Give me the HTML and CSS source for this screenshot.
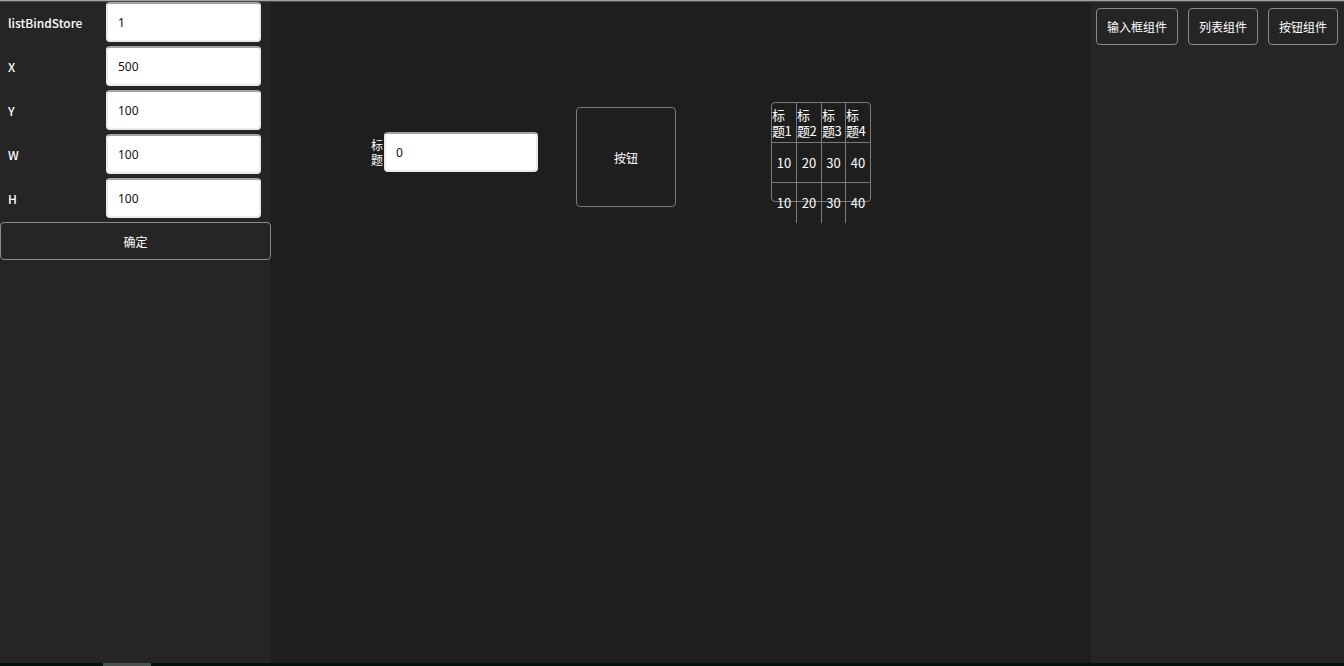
FILE: index.html
```html
<!DOCTYPE html>
<html lang="zh">
<head>
<meta charset="utf-8">
<title>编辑器</title>
<link rel="stylesheet" href="styles.css">
</head>
<body>
<div class="topbar"></div>
<div class="main">
  <aside class="props">
    <div class="row"><label class="lbl">listBindStore</label><input class="inp" value="1"></div>
    <div class="row"><label class="lbl">X</label><input class="inp" value="500"></div>
    <div class="row"><label class="lbl">Y</label><input class="inp" value="100"></div>
    <div class="row"><label class="lbl">W</label><input class="inp" value="100"></div>
    <div class="row"><label class="lbl">H</label><input class="inp" value="100"></div>
    <button class="ok">确定</button>
  </aside>
  <section class="canvas">
    <div class="item field-item">
      <span class="field-label">标题</span>
      <input class="field-inp" value="0">
    </div>
    <div class="item btn-item">按钮</div>
    <div class="item list-item">
      <div class="grid">
        <div class="c h">标题1</div><div class="c h">标题2</div><div class="c h">标题3</div><div class="c h last">标题4</div>
        <div class="c">10</div><div class="c">20</div><div class="c">30</div><div class="c last">40</div>
        <div class="c end">10</div><div class="c end">20</div><div class="c end">30</div><div class="c end last">40</div>
      </div>
    </div>
  </section>
  <aside class="palette">
    <button class="tool">输入框组件</button>
    <button class="tool">列表组件</button>
    <button class="tool">按钮组件</button>
  </aside>
</div>
<div class="bottombar"><div class="thumb"></div></div>
</body>
</html>
```

FILE: styles.css
```css
* { box-sizing: border-box; }
html, body {
  margin: 0;
  padding: 0;
  width: 1344px;
  height: 666px;
  overflow: hidden;
  background: #1e1e1e;
  font-family: "Noto Sans CJK SC", "Noto Sans", sans-serif;
  color: #fff;
}
.topbar {
  height: 2px;
  background: linear-gradient(#a4a4a4 50%, #4a4a4a 50%);
}
.main {
  display: flex;
  height: 661px;
}
.props {
  width: 270px;
  flex: none;
  background: #252525;
  padding-top: 0;
  display: flex;
  flex-direction: column;
  gap: 4px;
}
.row {
  display: flex;
  align-items: center;
  height: 40px;
}
.lbl {
  width: 106px;
  padding-left: 8px;
  font-size: 12px;
  font-weight: 500;
  color: #fff;
}
.inp {
  width: 155px;
  height: 40px;
  border: 2px solid #ebebeb;
  border-top-color: #a2a2a2;
  border-radius: 4px;
  background: #fff;
  padding: 0 0 0 10px;
  font-family: "Noto Sans", sans-serif;
  font-size: 12px;
  color: #111;
  outline: none;
}
.ok {
  margin-top: 0;
  width: 271px;
  height: 38px;
  background: transparent;
  border: 1px solid #8a8a8a;
  border-radius: 4px;
  color: #fff;
  font-family: inherit;
  font-size: 12px;
}
.canvas {
  position: relative;
  margin-left: 1px;
  width: 820px;
  flex: none;
  background: #1e1e1e;
}
.item { position: absolute; }
.field-item {
  left: 100px;
  top: 130px;
  height: 40px;
  display: flex;
  align-items: center;
}
.field-label {
  width: 13px;
  font-size: 12px;
  line-height: 15px;
}
.field-inp {
  width: 154px;
  height: 40px;
  border: 2px solid #ebebeb;
  border-top-color: #a2a2a2;
  border-radius: 4px;
  background: #fff;
  padding: 0 0 0 10px;
  font-family: "Noto Sans", sans-serif;
  font-size: 12px;
  color: #111;
  outline: none;
}
.btn-item {
  left: 305px;
  top: 105px;
  width: 100px;
  height: 100px;
  border: 1px solid #7a7a7a;
  border-radius: 4px;
  display: flex;
  align-items: center;
  justify-content: center;
  font-size: 12px;
}
.list-item {
  left: 500px;
  top: 100px;
  width: 100px;
  height: 100px;
  border: 1px solid #7a7a7a;
  border-radius: 4px;
}
.grid {
  display: grid;
  grid-template-columns: 25px 25px 24px 24px;
  grid-template-rows: 40px 40px 40px;
}
.c {
  border-right: 1px solid #7a7a7a;
  border-bottom: 1px solid #7a7a7a;
  display: flex;
  align-items: center;
  justify-content: center;
  font-size: 13px;
  line-height: 16px;
}
.c.h {
  justify-content: flex-start;
  font-size: 13px;
  letter-spacing: -0.5px;
  word-break: break-all;
}
.c.last { border-right: none; }
.c.end { border-bottom: none; }
.palette {
  flex: 1;
  background: #252525;
  display: flex;
  justify-content: flex-end;
  align-items: flex-start;
  gap: 10px;
  padding: 6px 6px 0 0;
}
.tool {
  height: 37px;
  padding: 0 10px;
  background: transparent;
  border: 1px solid #8a8a8a;
  border-radius: 4px;
  color: #fff;
  font-family: inherit;
  font-size: 12px;
}
.bottombar {
  height: 3px;
  background: #031111;
  padding-left: 103px;
}
.thumb {
  width: 48px;
  height: 3px;
  background: #4a5151;
}
```
